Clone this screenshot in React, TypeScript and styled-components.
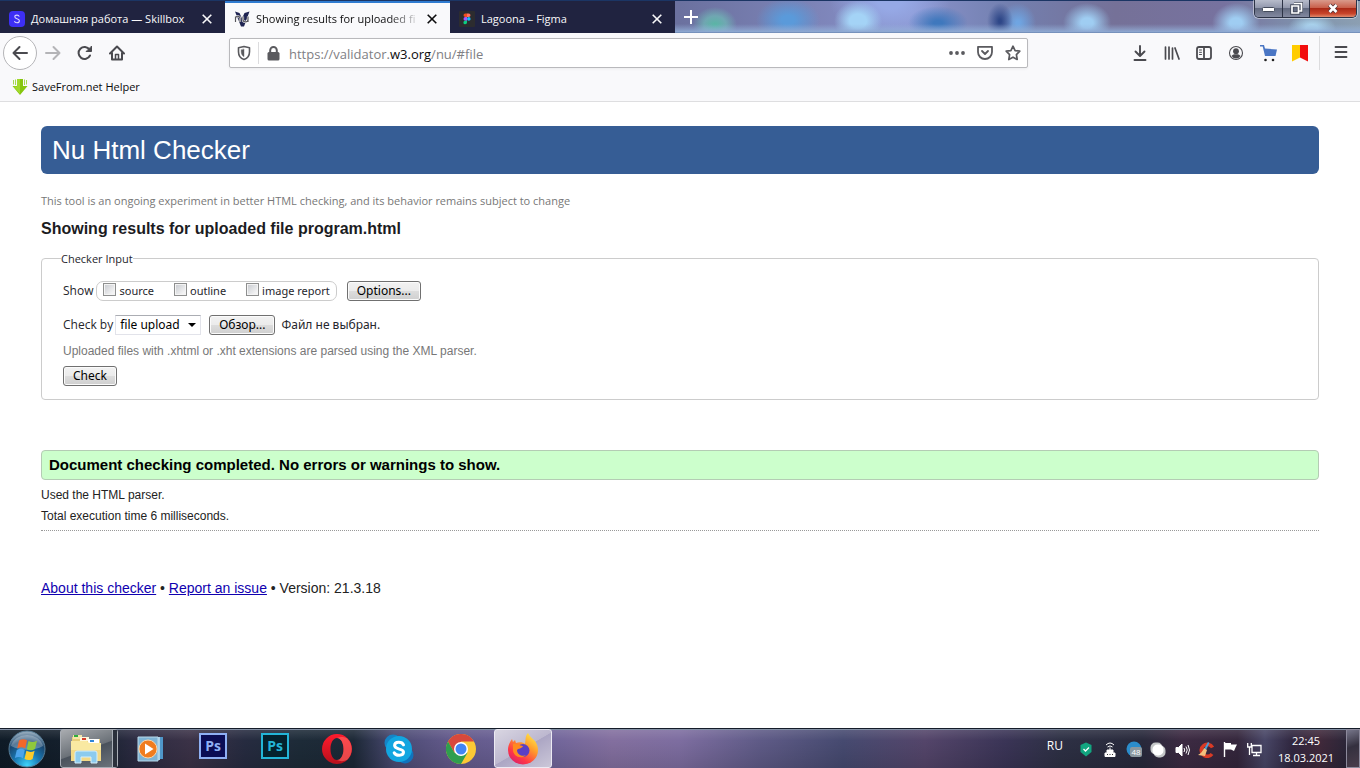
import React from "react";
import styled, { createGlobalStyle } from "styled-components";

const ui = `"Open Sans", "Noto Sans", sans-serif`;
const form = `"Noto Sans", "Open Sans", sans-serif`;
const arial = `"Liberation Sans", Arial, sans-serif`;

const Global = createGlobalStyle`
  * { box-sizing: border-box; }
  body { margin: 0; background: #fff; font-family: ${arial}; color: #222; }
  button, input, select { font: inherit; margin: 0; }
  svg { display: block; flex: none; }
`;

const Window = styled.div`
  min-height: 100vh;
  display: flex;
  flex-direction: column;
`;

/* ---------- tab strip ---------- */
const TabStrip = styled.header`
  height: 33px;
  display: flex;
  align-items: stretch;
  border-top: 1px solid #1b3564;
  position: relative;
  background:
    linear-gradient(to top, #5f7aa6 0, #8ea9d2 1px, rgba(150, 180, 220, 0.5) 4px, transparent 9px),
    radial-gradient(ellipse 22px 18px at 715px 24px, #58b6a4 0, #70bfb8aa 50%, transparent 100%),
    radial-gradient(ellipse 32px 22px at 788px 19px, #5a9ada 20%, transparent 100%),
    radial-gradient(ellipse 24px 20px at 858px 20px, #a4d3f6 35%, transparent 100%),
    radial-gradient(ellipse 30px 17px at 938px 22px, #3f78bd 15%, transparent 100%),
    radial-gradient(ellipse 13px 18px at 1000px 20px, #2e4788 10%, transparent 100%),
    radial-gradient(ellipse 18px 20px at 1018px 22px, #6fa5e2 10%, transparent 100%),
    radial-gradient(ellipse 24px 20px at 1087px 22px, #9fcdf2 25%, transparent 100%),
    radial-gradient(ellipse 24px 20px at 1236px 22px, #9fcdf2 25%, transparent 100%),
    radial-gradient(ellipse 24px 14px at 1312px 27px, #a9d2ec 25%, transparent 100%),
    radial-gradient(ellipse 60px 40px at 890px 0, #96a9e6 20%, transparent 100%),
    linear-gradient(to right, #6b719f 50%, #7d84b8 60%, #8a93cc 67%, #7380b0 74%, #757198 82%, #77729f 90%, #7f93ad 96%, #8c9fb2 100%);
`;

const Tab = styled.div<{ $active?: boolean }>`
  flex: 0 1 225px;
  min-width: 0;
  display: flex;
  align-items: center;
  gap: 6px;
  padding: 2px 13px 0 9px;
  border-top: 2px solid ${(p) => (p.$active ? "#2f7bd0" : "#202340")};
  background: ${(p) => (p.$active ? "#f9f9fb" : "#202340")};
  color: ${(p) => (p.$active ? "#0c0c0d" : "#f9f9fa")};
  font: 11px/16px ${ui};
`;

const TabTitle = styled.span<{ $fade?: boolean }>`
  flex: 1;
  min-width: 0;
  white-space: nowrap;
  ${(p) => p.$fade && "mask-image: linear-gradient(to left, transparent 0, #000 32px);"}
`;

const PlainButton = styled.button`
  border: 0;
  padding: 0;
  background: none;
  color: inherit;
  display: flex;
  align-items: center;
  justify-content: center;
`;

const NewTab = styled(PlainButton)`
  width: 32px;
  color: #fff;
`;

const WindowButtons = styled.div`
  position: absolute;
  top: -1px;
  right: 3px;
  display: flex;
  height: 18px;
  border: 1px solid #2c3346;
  border-top: 0;
  border-radius: 0 0 5px 5px;
  box-shadow: 0 0 0 1px rgba(255, 255, 255, 0.45);
  overflow: hidden;
`;

const WindowButton = styled(PlainButton)<{ $close?: boolean }>`
  width: ${(p) => (p.$close ? 47 : 27)}px;
  & + & { border-left: 1px solid #2c3346; }
  background: ${(p) =>
    p.$close
      ? "linear-gradient(#d99a8c, #c9604c 45%, #ab2a18 50%, #c8442a 80%, #e08a6c)"
      : "linear-gradient(#b7bccb, #9298ad 45%, #626a80 50%, #8389a0)"};
`;

/* ---------- toolbars ---------- */
const NavBar = styled.div`
  height: 40px;
  display: flex;
  align-items: center;
  background: #f9f9fb;
  color: #4a4a4f;
`;

const NavGroup = styled.nav`
  width: 229px;
  padding-left: 3px;
  display: flex;
  align-items: center;
`;

const BackButton = styled(PlainButton)`
  width: 34px;
  height: 34px;
  border: 1px solid #b5b5b8;
  border-radius: 50%;
  background: #fff;
`;

const ToolButton = styled(PlainButton)<{ $dim?: boolean }>`
  width: 32px;
  height: 32px;
  color: ${(p) => (p.$dim ? "#b4b4b7" : "inherit")};
`;

const UrlBar = styled.div`
  flex: 1;
  height: 30px;
  display: flex;
  align-items: center;
  border: 1px solid #b9b9bc;
  border-radius: 2px;
  background: #fff;
  box-shadow: 0 1px 3px rgba(0, 0, 0, 0.06);
  color: #5a5a5e;
`;

const Shield = styled(PlainButton)`
  width: 29px;
  height: 22px;
  border-right: 1px solid #dcdcde;
`;

const Lock = styled(PlainButton)`
  width: 28px;
`;

const Address = styled.span`
  flex: 1;
  margin-left: 2px;
  padding-top: 2px;
  font: 13px/20px ${ui};
  color: #808084;
  b { font-weight: 400; color: #0c0c0d; }
`;

const UrlAction = styled(PlainButton)`
  width: 28px;
`;

const Tools = styled.div`
  padding-left: 96px;
  display: flex;
  align-items: center;
`;

const MenuSlot = styled.div`
  height: 34px;
  margin-left: 3px;
  padding: 0 3px 0 5px;
  border-left: 1px solid #dcdcde;
`;

const Bookmarks = styled.div`
  height: 29px;
  padding-left: 11px;
  display: flex;
  align-items: center;
  border-bottom: 1px solid #dedee0;
  background: #f9f9fb;
`;

const Bookmark = styled.a`
  display: flex;
  align-items: center;
  gap: 3px;
  font: 11px/16px ${ui};
  color: #0c0c0d;
  text-decoration: none;
`;

/* ---------- page ---------- */
const Page = styled.main`
  flex: 1;
  padding: 24px 41px;
`;

const Title = styled.h1`
  margin: 0;
  padding: 0 11px;
  border-radius: 6px;
  background: #365d95;
  color: #fff;
  font: 26px/48px ${arial};
`;

const Tagline = styled.p`
  margin: 18px 0 0;
  font: 11px/18px ${ui};
  color: #777;
`;

const Heading = styled.h2`
  margin: 9px 0 0;
  font: bold 16px/20px ${arial};
  color: #1c1c1f;
`;

const Fieldset = styled.fieldset`
  margin: 9px 0 0;
  padding: 12px 21px 13px;
  border: 1px solid #ccc;
  border-radius: 4px;
  font: 12px/18px ${ui};
  color: #26262c;
`;

const Legend = styled.legend`
  margin-left: -2px;
  padding: 2px 0 0;
  font: 11px/18px ${ui};
`;

const FormRow = styled.div<{ $gap?: number }>`
  display: flex;
  align-items: center;
  height: 22px;
  margin-bottom: ${(p) => p.$gap ?? 0}px;
`;

const CheckGroup = styled.div`
  display: flex;
  align-items: center;
  gap: 20px;
  height: 20px;
  margin: 0 10px 0 3px;
  padding: 0 6px;
  border: 1px solid #ccc;
  border-radius: 7px;
  font: 11px/16px ${form};
`;

const CheckLabel = styled.label`
  display: flex;
  align-items: center;
  gap: 3px;
`;

const CheckBox = styled.input`
  appearance: none;
  width: 13px;
  height: 13px;
  margin-bottom: 4px;
  border: 1px solid #8e8f8f;
  background: linear-gradient(135deg, #c6c9ce, #f3f3f4 80%);
  box-shadow: inset 0 0 0 1px #f4f4f4;
`;

const FormButton = styled.button`
  height: 20px;
  padding: 0 9px;
  border: 1px solid #707070;
  border-radius: 3px;
  background: linear-gradient(#f2f2f2, #ebebeb 50%, #dddddd 50%, #cfcfcf);
  box-shadow: inset 0 0 0 1px #fbfbfb;
  color: #000;
  font: 12px/16px ${form};
`;

const SelectWrap = styled.span`
  position: relative;
  margin: 0 8px 0 2px;
  svg { position: absolute; right: 5px; top: 8px; pointer-events: none; }
`;

const Select = styled.select`
  appearance: none;
  display: block;
  width: 86px;
  height: 20px;
  padding: 0 4px;
  border: 1px solid #e2e3ea;
  border-top-color: #abadb3;
  background: #fff;
  color: #000;
  font: 12px/16px ${form};
`;

const FileName = styled.span`
  margin-left: 6px;
  font: 12px/16px ${form};
`;

const Hint = styled.p`
  margin: 0;
  height: 24px;
  font: 12px/18px ${arial};
  color: #777;
`;

const Success = styled.p`
  margin: 50px 0 0;
  padding: 0 7px;
  border: 1px solid #b4ccb4;
  border-radius: 4px;
  background: #cfc;
  font: bold 15px/28px ${arial};
  color: #000;
`;

const Details = styled.div`
  padding: 5px 0 3px;
  border-bottom: 1px dotted #999;
  font: 12px/21px ${arial};
  p { margin: 0; }
`;

const Footer = styled.footer`
  margin-top: 47px;
  font: 14px/20px ${arial};
  a { color: #0f00b0; }
`;

/* ---------- taskbar ---------- */
const Taskbar = styled.footer`
  height: 40px;
  display: flex;
  align-items: stretch;
  border-top: 1px solid #141c29;
  box-shadow: inset 0 1px 0 #8390a4;
  background:
    linear-gradient(rgba(255, 255, 255, 0.12), transparent 30%, rgba(0, 0, 0, 0.12)),
    linear-gradient(to right, #0e1a26 0, #17222f 7%, #2c2b42 10%, #3b3247 14%, #262b40 18%, #1d2b38 22%, #1c2836 26%, #4a4a72 29%, #62598a 33%, #6e649a 40%, #836f9f 45%, #7d6da0 50%, #5e5a86 56%, #464a70 62%, #54456a 68%, #3a3456 74%, #2d3044 78%, #28293b 84%, #3c2a42 87%, #34263c 91%, #484666 93%, #302740 95%, #41293b 97%, #202437 100%);
`;

const Slot = styled(PlainButton)`
  width: 62px;
`;

const StartSlot = styled(PlainButton)`
  width: 58px;
  padding-right: 4px;
`;

const OpenTile = styled.span<{ $bright?: boolean }>`
  position: relative;
  width: 58px;
  height: 39px;
  display: flex;
  align-items: center;
  justify-content: center;
  padding-right: ${(p) => (p.$bright ? 0 : 6)}px;
  border: 1px solid ${(p) => (p.$bright ? "#eceaf3" : "#a8adb5")};
  border-radius: 3px;
  background: ${(p) =>
    p.$bright
      ? "linear-gradient(150deg, #d9d6e2, #bdb8cf 50%, #aca6c4 51%, #cbc7d8)"
      : "linear-gradient(160deg, #a9acb0, #6b7178 50%, #4a525c 52%, #6d747c)"};
`;

const StackEdge = styled.span`
  position: absolute;
  top: 0;
  right: 0;
  bottom: 0;
  width: 5px;
  border-left: 1px solid #aab0b8;
  background: #2b313c;
`;

const AppTile = styled.span<{ $edge: string; $bg: string }>`
  width: 28px;
  height: 26px;
  margin-bottom: 5px;
  border: 2px solid ${(p) => p.$edge};
  background: ${(p) => p.$bg};
  color: ${(p) => p.$edge};
  font: bold 14px/21px ${ui};
`;

const Tray = styled.div`
  margin-left: auto;
  display: flex;
  align-items: center;
  color: #fff;
`;

const Language = styled.span`
  margin: 0 11px 6px 0;
  font: 12px/16px ${ui};
`;

const TrayIcon = styled(PlainButton)`
  width: 24px;
  height: 24px;
  margin-top: 2px;
`;

const Clock = styled.time`
  width: 80px;
  font: 11px/17px ${ui};
  text-align: center;
`;

const ShowDesktop = styled.button`
  align-self: stretch;
  width: 14px;
  padding: 0;
  border: 1px solid #8d8a9c;
  background: linear-gradient(160deg, #77768a, #34303f 45%, #4a3d4b);
`;

/* ---------- drawings ---------- */
const Cross = () => (
  <svg width="10" height="10" viewBox="0 0 10 10">
    <path d="M.7.7l8.6 8.6M9.3.7L.7 9.3" stroke="currentColor" strokeWidth="1.6" />
  </svg>
);

const Stroke = ({ d, size = 16, w = 2, children }: { d: string; size?: number; w?: number; children?: React.ReactNode }) => (
  <svg width={size} height={size} viewBox="0 0 16 16" fill="none" stroke="currentColor" strokeWidth={w} strokeLinecap="round" strokeLinejoin="round">
    <path d={d} />
    {children}
  </svg>
);

const SkillboxIcon = () => (
  <svg width="16" height="16" viewBox="0 0 16 16">
    <rect width="16" height="16" rx="4" fill="#3d2ff5" />
    <path d="M10.3 5.600C9.900 4.500 9 4.100 8 4.100 6.700 4.100 5.800 4.800 5.800 5.800 5.800 8.300 10.400 7 10.400 9.800 10.400 11 9.400 11.800 8 11.800 6.700 11.800 5.700 11.200 5.500 10" fill="none" stroke="#d9d6ff" strokeWidth="1.1" />
  </svg>
);

const NuIcon = () => (
  <svg width="16" height="16" viewBox="0 0 16 16">
    <path d="M1 .5L5.500 2 8 7.500 10.500 2 15.500.5 10 15.500H7z" fill="#1f2452" />
    <path d="M1.500 11V5.500M1.500 7.500c0-3 4.500-3 4.500 0V11M9 5.500V8.800c0 2.800 5 2.800 5 0V5.500M14 5.500V11" fill="none" stroke="#fff" strokeWidth="2.200" />
    <path d="M1.500 11V5.500M1.500 7.500c0-3 4.500-3 4.500 0V11M9 5.500V8.800c0 2.800 5 2.800 5 0V5.500M14 5.500V11" fill="none" stroke="#55555c" strokeWidth="1.200" />
  </svg>
);

const FigmaIcon = () => (
  <svg width="16" height="16" viewBox="0 0 16 16">
    <rect width="16" height="16" rx="1" fill="#2c2c2f" />
    <path d="M8 2.500H6.300a1.800 1.800 0 000 3.600H8z" fill="#f24e1e" />
    <path d="M8 2.500h1.700a1.800 1.800 0 010 3.600H8z" fill="#ff7262" />
    <path d="M8 6.100H6.300a1.800 1.800 0 000 3.600H8z" fill="#a259ff" />
    <circle cx="9.800" cy="7.900" r="1.800" fill="#1abcfe" />
    <path d="M8 9.700H6.300A1.800 1.800 0 108 11.500z" fill="#0acf83" />
  </svg>
);

const DownloadArrow = () => (
  <svg width="18" height="18" viewBox="0 0 18 18">
    <path d="M6 1h6v7h4.500L9 17 1.500 8H6z" fill="#86c60e" />
    <path d="M6 1h3v15L2.500 8.500H6z" fill="#a2d92c" />
    <path d="M2.500 2v4.500M4.500 1.500V7M13.500 1.500V7M15.500 2v4.500" stroke="#a6d850" />
  </svg>
);

const MinimizeGlyph = () => (
  <svg width="13" height="6" viewBox="0 0 13 6"><rect x=".5" y="1.500" width="12" height="4" rx="1" fill="#fff" stroke="#454c5c" /></svg>
);

const RestoreGlyph = () => (
  <svg width="13" height="13" viewBox="0 0 13 13" fill="none">
    <path d="M4 1.500h7.500V9H9M2 4h6.500v7H2z" stroke="#454c5c" strokeWidth="3.500" />
    <path d="M4 1.500h7.500V9H9M2 4h6.500v7H2z" stroke="#fff" strokeWidth="1.700" />
  </svg>
);

const CloseGlyph = () => (
  <svg width="12" height="11" viewBox="0 0 12 11">
    <path d="M2.500 2l7 7M9.500 2l-7 7" stroke="#58363a" strokeWidth="4.400" />
    <path d="M2.500 2l7 7M9.500 2l-7 7" stroke="#fff" strokeWidth="2.600" />
  </svg>
);

const StartOrb = () => (
  <svg width="38" height="38" viewBox="0 0 38 38">
    <defs>
      <radialGradient id="orb" cx=".5" cy=".95" r=".9">
        <stop offset="0" stopColor="#3fd4fb" />
        <stop offset=".4" stopColor="#1979b4" />
        <stop offset=".75" stopColor="#19466f" />
        <stop offset="1" stopColor="#8fa6b9" />
      </radialGradient>
    </defs>
    <circle cx="19" cy="19" r="18" fill="url(#orb)" stroke="#567c96" />
    <path d="M3 16a16.500 14.500 0 0132 0c-9 5-22 5-32 0z" fill="#fff" opacity=".28" />
    <path d="M11 10.500q4-2.500 8-.2l-1.800 8.200q-3.700-2.300-8 0z" fill="#f2672a" />
    <path d="M20.500 11q4 2.200 8.500-.3l-2 8.300q-4 2.500-8.200.2z" fill="#8fc83c" />
    <path d="M8.800 20q4.200-2.300 8 0l-1.900 8.200q-3.800-2.400-8-.2z" fill="#4ba4ec" />
    <path d="M18.400 20.800q4 2.300 8.200-.1l-2 8.200q-4 2.300-8.100.1z" fill="#fccb2b" />
  </svg>
);

const ExplorerIcon = () => (
  <svg width="34" height="32" viewBox="0 0 34 32">
    <path d="M3 4h10l1 2h17v22H3z" fill="#e8cf7a" />
    <path d="M4 2h9v4H4z" fill="#f4e6a8" /><rect x="5" y="2" width="4" height="2" fill="#2fae3c" />
    <path d="M11 4h9v4h-9z" fill="#fdf7dc" /><rect x="13" y="5" width="4" height="2" fill="#d8402c" />
    <path d="M19 6h11v4H19z" fill="#fff" /><rect x="21" y="7" width="4" height="2" fill="#2f86d8" />
    <path d="M2 8h16l2 2h12v18H2z" fill="#f9e9a2" />
    <path d="M2 17h30v11H2z" fill="#eecf72" opacity=".6" />
    <path d="M6 30V20q0-2 2-2h18q2 0 2 2v10h-6v-6H12v6z" fill="#8ccbee" stroke="#d4effc" />
  </svg>
);

const PlayerIcon = () => (
  <svg width="28" height="26" viewBox="0 0 28 26">
    <path d="M7 1h19v22H7z" fill="#4f97c9" /><path d="M5 1h18v23H5z" fill="#a8d2ea" /><path d="M1 1h20v24H1z" fill="#7eb3d4" stroke="#b9d9ea" />
    <circle cx="11" cy="13" r="9" fill="#f07c1e" stroke="#fbd5a8" />
    <path d="M8 7.500l8.500 5.500L8 18.500z" fill="#fff" />
  </svg>
);

const OperaIcon = () => (
  <svg width="30" height="30" viewBox="0 0 30 30">
    <defs><linearGradient id="op" x2="0" y2="1"><stop stopColor="#ff1b2d" /><stop offset="1" stopColor="#b8101c" /></linearGradient></defs>
    <path fillRule="evenodd" fill="url(#op)" d="M15 0a15 15 0 100 30 15 15 0 000-30zm0 4c4 0 6.500 5 6.500 11S19 26 15 26 8.500 21 8.500 15 11 4 15 4z" />
    <path d="M15 4c3-1.500 7-1 10 .2A15 15 0 0125 26c-3 1.500-7 1.500-10 0 4 0 6.500-5 6.500-11S19 4 15 4z" fill="#ff6a66" opacity=".6" />
  </svg>
);

const SkypeIcon = () => (
  <svg width="30" height="30" viewBox="0 0 30 30">
    <circle cx="9" cy="9" r="8.500" fill="#1584c6" /><circle cx="21" cy="21" r="8.500" fill="#1173bd" />
    <circle cx="15" cy="15" r="13" fill="#12a5e0" />
    <path d="M19.500 10.800C18 7.500 10.600 7.300 10.600 11.600c0 4.500 8.900 2.500 8.900 6.500 0 4.200-7.500 4.200-9.300.7" fill="none" stroke="#fff" strokeWidth="3" strokeLinecap="round" />
  </svg>
);

const ChromeIcon = () => (
  <svg width="30" height="30" viewBox="0 0 30 30">
    <circle cx="15" cy="15" r="15" fill="#fcc934" />
    <path d="M2 7.500A15 15 0 0128 7.500H15L8.500 18.800z" fill="#d8483c" />
    <path d="M2 7.500A15 15 0 0015 30l6.500-11.200H8.500z" fill="#2f9e4e" />
    <circle cx="15" cy="15" r="7" fill="#fff" /><circle cx="15" cy="15" r="5.500" fill="#4285f4" />
  </svg>
);

const FirefoxIcon = () => (
  <svg width="32" height="32" viewBox="0 0 32 32">
    <defs><linearGradient id="fx" x1=".9" y1="0" x2=".2" y2="1"><stop stopColor="#fff44f" /><stop offset=".4" stopColor="#ff9a2b" /><stop offset=".75" stopColor="#ff3647" /><stop offset="1" stopColor="#d6206d" /></linearGradient></defs>
    <path d="M21 0c1 3 4 5 7 8 2 3 3 6 3 9A15 14.500 0 011 17c0-5 2-8 4-11l1 3 2-2 1 3c3-1 7-1 9 1 1-5 0-8 3-11z" fill="url(#fx)" />
    <circle cx="16" cy="17.500" r="6.500" fill="#5b3fc4" />
    <path d="M6 11c4-1 6 2 10 2-1 3-5 2-6 4 0 5 6 7 9 5-5 5-13 1-13-5z" fill="#ff8a1f" />
  </svg>
);

const LibraryIcon = () => (
  <svg width="16" height="16" viewBox="0 0 16 16" stroke="currentColor" strokeWidth="1.700" strokeLinecap="round">
    <path d="M1.500 2v12M5 2v12M8.500 3v11M11 3l4 11" />
  </svg>
);

const AccountIcon = () => (
  <svg width="16" height="16" viewBox="0 0 16 16">
    <circle cx="8" cy="8" r="6.500" fill="none" stroke="currentColor" strokeWidth="1.100" />
    <circle cx="8" cy="6.200" r="2.900" fill="currentColor" />
    <path d="M3.500 11q1.500-2 3-1.800h3q1.500-.2 3 1.800-1.800 2.500-4.500 2.500T3.500 11z" fill="currentColor" />
  </svg>
);

const CartIcon = () => (
  <svg width="17" height="17" viewBox="0 0 17 17">
    <path d="M0 0h4l1 3.500 12 1L15.500 11H5L2.700 1.500H0z" fill="#4a76c4" />
    <circle cx="5.500" cy="15" r="1.300" fill="#222" /><circle cx="13" cy="15" r="1.300" fill="#222" />
  </svg>
);

const FlagBookmark = () => (
  <svg width="16" height="17" viewBox="0 0 16 17"><path d="M0 0h8v12.500L0 16.500z" fill="#fc0" /><path d="M8 0h8v16.500L8 12.500z" fill="#f20d0d" /></svg>
);

const trayIcons: { name: string; art: React.ReactNode }[] = [
  { name: "Protection", art: <svg width="12" height="15" viewBox="0 0 12 15"><path d="M6 .5L11.500 3v7L6 14.500.5 10V3z" fill="#12a580" /><path d="M3.500 7l2 2 3.500-3.500" fill="none" stroke="#fff" strokeWidth="1.300" /></svg> },
  { name: "Modem", art: <svg width="12" height="15" viewBox="0 0 12 15" fill="none" stroke="#fff"><path d="M2 3q4-4 8 0M3.500 5q2.500-2.200 5 0M6 5.500V8" /><path d="M3 8h6v3H3z" fill="#fff" /><path d="M1 11h10v3.500H1z" fill="#fff" /><path d="M3 12.500h1M5.500 12.500h1M8 12.500h1" stroke="#333" /></svg> },
  { name: "Updates", art: <svg width="17" height="17" viewBox="0 0 17 17"><circle cx="8" cy="8" r="7.500" fill="#2b8dcb" /><rect x="4" y="6" width="12" height="10" rx="2" fill="#8b989f" /><text x="10" y="14" fontSize="8" textAnchor="middle" fill="#fff" fontFamily="Open Sans, sans-serif">48</text></svg> },
  { name: "Messenger", art: <svg width="16" height="16" viewBox="0 0 16 16"><rect x=".5" y=".5" width="12" height="12" rx="5" fill="#c4c7c8" /><rect x="3.500" y="3.500" width="12" height="12" rx="5" fill="#c4c7c8" /><rect x="2.500" y="2.500" width="11" height="11" rx="5" fill="#fff" /></svg> },
  { name: "Volume", art: <svg width="15" height="14" viewBox="0 0 15 14" fill="none" stroke="#fff"><path d="M1 4.500h2.500L7 1v12L3.500 9.500H1z" fill="#fff" /><path d="M9 5q1.500 2 0 4M11 3.500q2.500 3.500 0 7M13 2q3 5 0 10" /></svg> },
  { name: "Cleaner", art: <svg width="16" height="16" viewBox="0 0 16 16"><path d="M14.500 5.500A6 6 0 1014 12" fill="none" stroke="#d93a25" strokeWidth="3.500" /><path d="M10 0l1.500 1L8 8 6 7z" fill="#4b9bd3" /><path d="M6 6l3 2-2 6-7-1q4-2 6-7z" fill="#f2c07e" /></svg> },
  { name: "Action centre", art: <svg width="15" height="15" viewBox="0 0 15 15"><path d="M1.500 0v15" stroke="#fff" strokeWidth="1.400" /><path d="M2 1h6v1.500h6l-1.500 3L11 9 8 7.500H2z" fill="#fff" /></svg> },
  { name: "Network", art: <svg width="15" height="15" viewBox="0 0 15 15" fill="none" stroke="#fff" strokeWidth="1.300"><path d="M5 3.500h9v7H5zM6 13.500h7M9.500 10.500v3M.7 1v4h3.600V1M2.500 5v8" /></svg> },
];

const checks = ["source", "outline", "image report"];

export default function App() {
  return (
    <Window>
      <Global />
      <TabStrip>
        <Tab>
          <SkillboxIcon />
          <TabTitle>Домашняя работа — Skillbox</TabTitle>
          <PlainButton aria-label="Close tab"><Cross /></PlainButton>
        </Tab>
        <Tab $active>
          <NuIcon />
          <TabTitle $fade>Showing results for uploaded fi</TabTitle>
          <PlainButton aria-label="Close tab"><Cross /></PlainButton>
        </Tab>
        <Tab>
          <FigmaIcon />
          <TabTitle>Lagoona – Figma</TabTitle>
          <PlainButton aria-label="Close tab"><Cross /></PlainButton>
        </Tab>
        <NewTab aria-label="New tab">
          <svg width="14" height="14" viewBox="0 0 14 14"><path d="M7 0v14M0 7h14" stroke="currentColor" strokeWidth="2" /></svg>
        </NewTab>
        <WindowButtons>
          <WindowButton aria-label="Minimize"><MinimizeGlyph /></WindowButton>
          <WindowButton aria-label="Restore"><RestoreGlyph /></WindowButton>
          <WindowButton $close aria-label="Close"><CloseGlyph /></WindowButton>
        </WindowButtons>
      </TabStrip>

      <NavBar>
        <NavGroup>
          <BackButton aria-label="Back"><Stroke d="M15 8H1.500M7.500 2L1.500 8l6 6" /></BackButton>
          <ToolButton $dim aria-label="Forward"><Stroke d="M1 8h13.500M8.500 2l6 6-6 6" /></ToolButton>
          <ToolButton aria-label="Reload">
            <Stroke d="M13 10.500A6 6 0 1112.500 4.500"><path d="M14.500 1.500v5h-5z" fill="currentColor" strokeWidth="1" /></Stroke>
          </ToolButton>
          <ToolButton aria-label="Home">
            <Stroke d="M1 8.500L8 1.500l7 7M3 8v6.500h10V8"><path d="M6.500 14V9.500h3V14" strokeWidth="1.500" /></Stroke>
          </ToolButton>
        </NavGroup>
        <UrlBar>
          <Shield aria-label="Tracking protection">
            <Stroke w={1.6} d="M8 1.500l5.500 1.300v4c0 4-2.200 6.700-5.500 7.700-3.300-1-5.500-3.700-5.500-7.700v-4z"><path d="M8 4.300v7.400C6 10.500 5.200 9 5.200 6.500V5z" fill="currentColor" strokeWidth=".4" /></Stroke>
          </Shield>
          <Lock aria-label="Site information">
            <svg width="13" height="15" viewBox="0 0 13 15"><rect x=".5" y="6" width="12" height="8.500" rx="1.500" fill="currentColor" /><path d="M3.200 7V4.300a3.300 3.300 0 016.600 0V7" fill="none" stroke="currentColor" strokeWidth="2" /></svg>
          </Lock>
          <Address>https://validator.<b>w3.org</b>/nu/#file</Address>
          <UrlAction aria-label="Page actions">
            <svg width="16" height="4" viewBox="0 0 16 4" fill="currentColor"><circle cx="2" cy="2" r="1.900" /><circle cx="8" cy="2" r="1.900" /><circle cx="14" cy="2" r="1.900" /></svg>
          </UrlAction>
          <UrlAction aria-label="Save to Pocket">
            <Stroke w={1.8} d="M1 1.800h14v5.200c0 4-3.100 7-7 7s-7-3-7-7zM5 6l3 3 3-3" />
          </UrlAction>
          <UrlAction aria-label="Bookmark">
            <Stroke w={1.7} d="M8 1.200l2.100 4.400 4.700.6-3.400 3.400.8 4.900L8 12.200l-4.200 2.300.8-4.900L1.200 6.200l4.700-.6z" />
          </UrlAction>
        </UrlBar>
        <Tools>
          <ToolButton aria-label="Downloads"><Stroke w={1.9} d="M8 1v9.500M3.500 6.500L8 11l4.500-4.500M2.500 15h11" /></ToolButton>
          <ToolButton aria-label="Library"><LibraryIcon /></ToolButton>
          <ToolButton aria-label="Sidebars">
            <Stroke w={1.8} d="M3 2h10q2 0 2 2v8q0 2-2 2H3q-2 0-2-2V4q0-2 2-2zM8 2v12"><path d="M3.500 5h2M3.500 7.300h2M3.500 9.500h2" strokeWidth="1" /></Stroke>
          </ToolButton>
          <ToolButton aria-label="Account"><AccountIcon /></ToolButton>
          <ToolButton aria-label="Shopping"><CartIcon /></ToolButton>
          <ToolButton aria-label="Yandex bookmarks"><FlagBookmark /></ToolButton>
          <MenuSlot>
            <ToolButton aria-label="Menu"><Stroke size={16} w={1.8} d="M2.500 3h11M2.500 8h11M2.500 13h11" /></ToolButton>
          </MenuSlot>
        </Tools>
      </NavBar>

      <Bookmarks>
        <Bookmark href="#helper"><DownloadArrow />SaveFrom.net Helper</Bookmark>
      </Bookmarks>

      <Page>
        <Title>Nu Html Checker</Title>
        <Tagline>This tool is an ongoing experiment in better HTML checking, and its behavior remains subject to change</Tagline>
        <Heading>Showing results for uploaded file program.html</Heading>
        <form onSubmit={(e) => e.preventDefault()}>
          <Fieldset>
            <Legend>Checker Input</Legend>
            <FormRow $gap={12}>
              <span>Show</span>
              <CheckGroup>
                {checks.map((c) => (
                  <CheckLabel key={c}><CheckBox type="checkbox" />{c}</CheckLabel>
                ))}
              </CheckGroup>
              <FormButton type="button">Options...</FormButton>
            </FormRow>
            <FormRow $gap={6}>
              <label htmlFor="docselect">Check by</label>
              <SelectWrap>
                <Select id="docselect" defaultValue="file">
                  <option value="address">address</option>
                  <option value="file">file upload</option>
                  <option value="text">text input</option>
                </Select>
                <svg width="8" height="4" viewBox="0 0 8 4"><path d="M0 0h8L4 4z" fill="#000" /></svg>
              </SelectWrap>
              <FormButton type="button">Обзор...</FormButton>
              <FileName>Файл не выбран.</FileName>
            </FormRow>
            <Hint>Uploaded files with .xhtml or .xht extensions are parsed using the XML parser.</Hint>
            <FormButton type="submit">Check</FormButton>
          </Fieldset>
        </form>
        <Success>Document checking completed. No errors or warnings to show.</Success>
        <Details>
          <p>Used the HTML parser.</p>
          <p>Total execution time 6 milliseconds.</p>
        </Details>
        <Footer>
          <a href="#about">About this checker</a> • <a href="#issue">Report an issue</a> • Version: 21.3.18
        </Footer>
      </Page>

      <Taskbar>
        <StartSlot aria-label="Start"><StartOrb /></StartSlot>
        <Slot aria-label="Explorer"><OpenTile><ExplorerIcon /><StackEdge /></OpenTile></Slot>
        <Slot aria-label="Media player"><PlayerIcon /></Slot>
        <Slot><AppTile $edge="#8fb0f4" $bg="#0b0d55">Ps</AppTile></Slot>
        <Slot><AppTile $edge="#23b5d8" $bg="#04222e">Ps</AppTile></Slot>
        <Slot aria-label="Opera"><OperaIcon /></Slot>
        <Slot aria-label="Skype"><SkypeIcon /></Slot>
        <Slot aria-label="Chrome"><ChromeIcon /></Slot>
        <Slot aria-label="Firefox"><OpenTile $bright><FirefoxIcon /></OpenTile></Slot>
        <Tray>
          <Language>RU</Language>
          {trayIcons.map((t) => (
            <TrayIcon key={t.name} aria-label={t.name}>{t.art}</TrayIcon>
          ))}
          <Clock>22:45<br />18.03.2021</Clock>
          <ShowDesktop aria-label="Show desktop" />
        </Tray>
      </Taskbar>
    </Window>
  );
}
